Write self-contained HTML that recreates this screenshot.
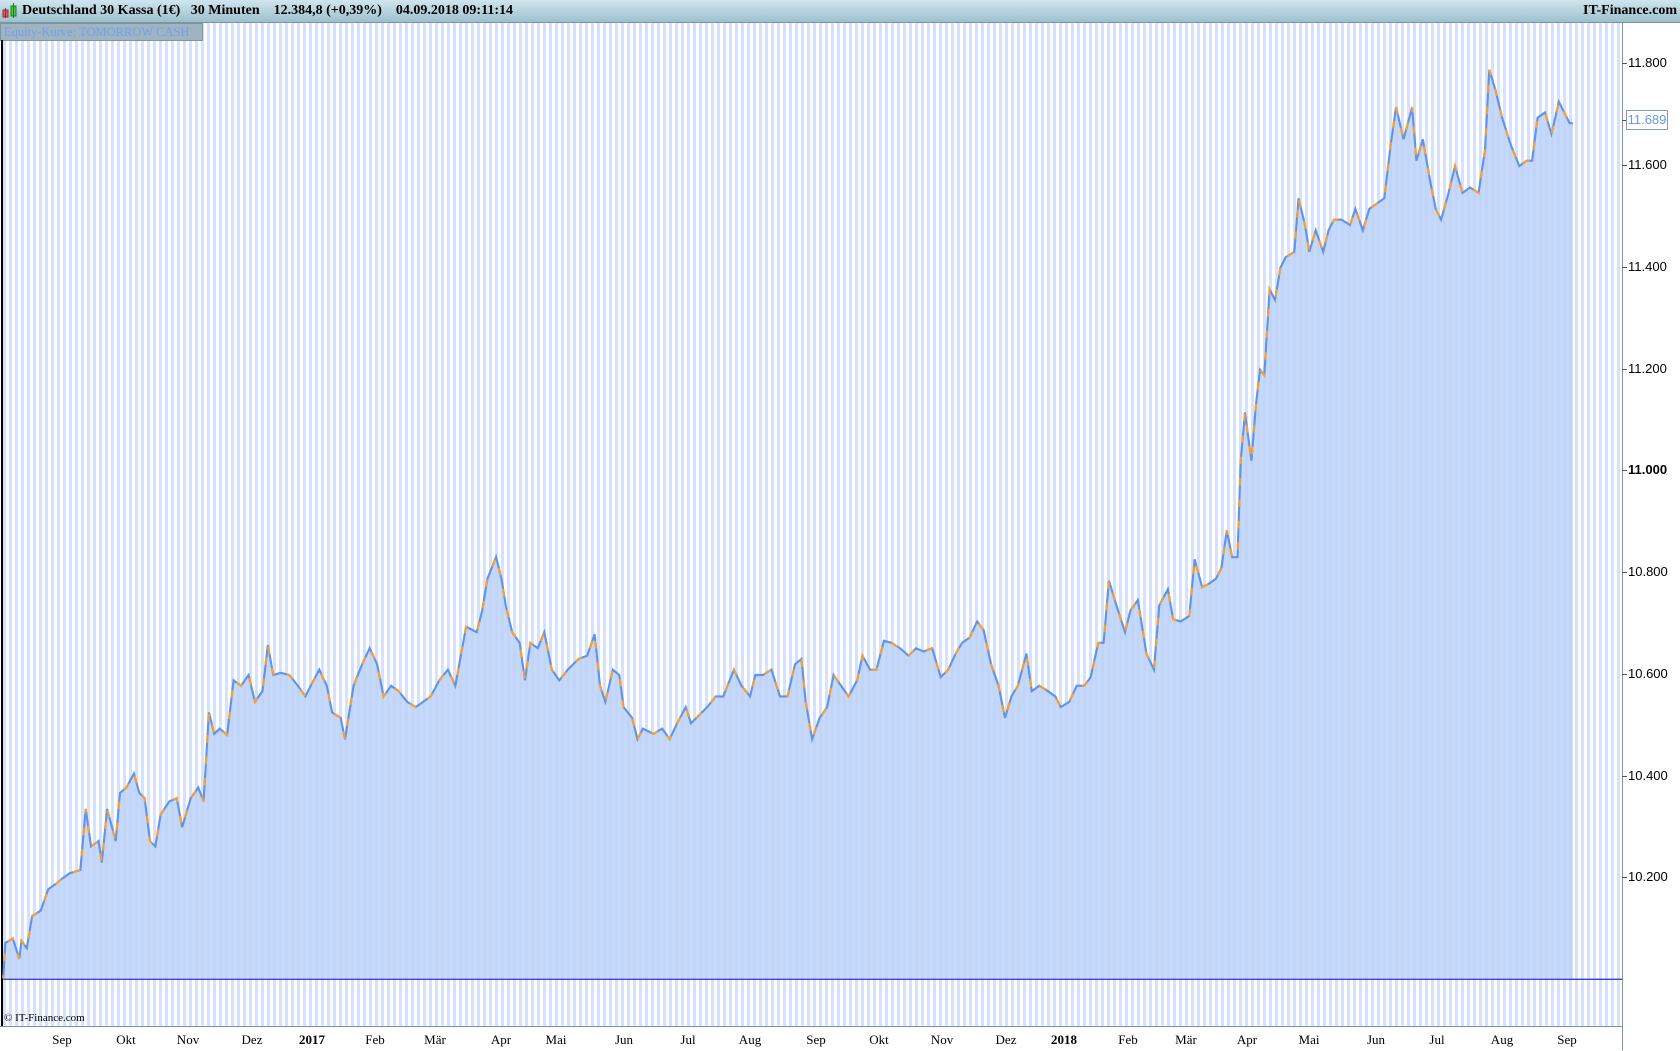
<!DOCTYPE html>
<html><head><meta charset="utf-8"><style>
html,body{margin:0;padding:0;width:1680px;height:1050px;overflow:hidden;background:#fff;font-family:"Liberation Serif",serif}
#hdr{position:absolute;left:0;top:0;width:1680px;height:22px;background:linear-gradient(#cfe5ee,#9ec0cc);border-bottom:1px solid #7b96a0;font-weight:bold;font-size:14px;line-height:22px}
#plot{position:absolute;left:0;top:23px;width:1622px;height:1003px;background:repeating-linear-gradient(90deg,#fff 0,#fff 3px,#d6e2fb 3px,#d6e2fb 6px)}
#raxis{position:absolute;left:1622px;top:23px;width:58px;height:1027px;border-left:1px solid #7b96a0;background:#fff}
#baxis{position:absolute;left:0;top:1026px;width:1622px;height:24px;border-top:1px solid #7b96a0;background:#fff}
.yl{position:absolute;left:1628px;font-size:13px;font-family:"Liberation Sans",sans-serif;color:#000}
.tk{position:absolute;left:1622px;width:5px;height:1px;background:#555}
.ml{position:absolute;top:1032px;font-size:13px;transform:translateX(-50%)}
</style></head><body>
<div id="hdr">
<svg style="position:absolute;left:2px;top:3px" width="18" height="16"><rect x="1" y="7" width="5" height="7" fill="#e55" stroke="#833"/><line x1="3.5" y1="5" x2="3.5" y2="15" stroke="#833"/><rect x="9" y="3" width="5" height="10" fill="#4c4" stroke="#272"/><line x1="11.5" y1="0" x2="11.5" y2="15" stroke="#272"/></svg>
<span style="position:absolute;left:22px">Deutschland 30 Kassa (1€)&nbsp;&nbsp;&nbsp;30 Minuten&nbsp;&nbsp;&nbsp;&nbsp;12.384,8 (+0,39%)&nbsp;&nbsp;&nbsp;&nbsp;04.09.2018 09:11:14</span>
<span style="position:absolute;right:3px">IT-Finance.com</span>
</div>
<div id="plot"></div>
<div style="position:absolute;left:0;top:23px;width:198px;height:16px;background:#9fb4c0;border:1px solid #7b96a0;color:#6f9ff0;font-size:12.5px;line-height:16px;padding-left:3px;white-space:nowrap;overflow:hidden">Equity-Kurve: TOMORROW CASH</div>
<div style="position:absolute;left:1px;top:40px;width:2px;height:986px;background:#000"></div>
<svg style="position:absolute;left:0;top:0" width="1680" height="1050" viewBox="0 0 1568 980">
<defs><polyline id="ln" points="3,913 5,880 12,876 18,895 20,878 25,885 30,855 38,850 45,830 52,825 58,820 65,815 75,812 80,755 85,790 92,785 95,805 100,755 108,785 112,740 118,735 125,722 130,740 135,745 140,785 145,790 150,760 158,748 165,745 170,772 178,745 185,735 190,748 195,665 200,685 205,680 212,686 218,635 225,640 232,630 238,655 245,645 250,602 255,630 262,628 270,630 278,640 285,650 290,640 298,625 305,640 310,665 318,670 322,690 330,640 338,620 345,605 352,620 358,650 365,640 372,645 380,655 388,660 395,655 402,650 410,635 418,625 425,640 435,585 445,590 450,570 455,540 463,520 468,540 472,565 478,590 485,600 490,635 495,600 502,605 508,590 515,625 522,635 530,625 540,615 548,612 555,592 560,640 565,655 572,625 578,630 582,660 590,670 595,690 600,680 610,685 618,680 625,690 632,675 640,660 645,675 650,670 660,660 668,650 675,650 685,625 692,640 700,650 705,630 712,630 720,625 728,650 735,650 742,620 748,615 752,655 758,690 765,670 772,660 778,630 785,640 792,650 800,635 805,612 812,625 818,625 825,598 832,600 840,605 848,612 855,605 862,608 870,605 878,632 885,625 892,610 898,600 905,595 912,580 918,588 925,620 932,640 938,670 944,650 950,640 958,610 963,645 970,640 978,645 985,650 990,660 998,655 1005,640 1012,640 1018,632 1025,600 1030,600 1035,542 1042,565 1050,590 1055,570 1062,560 1070,610 1077,625 1082,565 1090,550 1095,578 1102,580 1110,575 1115,522 1122,548 1128,545 1135,540 1140,530 1145,495 1150,520 1155,520 1158,430 1162,385 1168,430 1172,380 1176,345 1180,350 1185,270 1190,280 1195,250 1200,240 1208,235 1212,185 1218,210 1222,235 1228,215 1235,235 1240,215 1245,205 1252,205 1260,210 1265,195 1272,215 1278,195 1285,190 1292,185 1298,135 1303,100 1310,130 1318,100 1322,150 1328,130 1335,170 1340,195 1345,205 1352,180 1358,155 1365,180 1372,175 1380,180 1386,140 1390,65 1396,85 1402,110 1410,135 1418,155 1425,150 1430,150 1435,110 1442,105 1448,125 1455,95 1460,105 1465,115 1468,115"/></defs>
<path fill="#bcd2f8" fill-opacity="0.85" d="M3,913 L5,880 12,876 18,895 20,878 25,885 30,855 38,850 45,830 52,825 58,820 65,815 75,812 80,755 85,790 92,785 95,805 100,755 108,785 112,740 118,735 125,722 130,740 135,745 140,785 145,790 150,760 158,748 165,745 170,772 178,745 185,735 190,748 195,665 200,685 205,680 212,686 218,635 225,640 232,630 238,655 245,645 250,602 255,630 262,628 270,630 278,640 285,650 290,640 298,625 305,640 310,665 318,670 322,690 330,640 338,620 345,605 352,620 358,650 365,640 372,645 380,655 388,660 395,655 402,650 410,635 418,625 425,640 435,585 445,590 450,570 455,540 463,520 468,540 472,565 478,590 485,600 490,635 495,600 502,605 508,590 515,625 522,635 530,625 540,615 548,612 555,592 560,640 565,655 572,625 578,630 582,660 590,670 595,690 600,680 610,685 618,680 625,690 632,675 640,660 645,675 650,670 660,660 668,650 675,650 685,625 692,640 700,650 705,630 712,630 720,625 728,650 735,650 742,620 748,615 752,655 758,690 765,670 772,660 778,630 785,640 792,650 800,635 805,612 812,625 818,625 825,598 832,600 840,605 848,612 855,605 862,608 870,605 878,632 885,625 892,610 898,600 905,595 912,580 918,588 925,620 932,640 938,670 944,650 950,640 958,610 963,645 970,640 978,645 985,650 990,660 998,655 1005,640 1012,640 1018,632 1025,600 1030,600 1035,542 1042,565 1050,590 1055,570 1062,560 1070,610 1077,625 1082,565 1090,550 1095,578 1102,580 1110,575 1115,522 1122,548 1128,545 1135,540 1140,530 1145,495 1150,520 1155,520 1158,430 1162,385 1168,430 1172,380 1176,345 1180,350 1185,270 1190,280 1195,250 1200,240 1208,235 1212,185 1218,210 1222,235 1228,215 1235,235 1240,215 1245,205 1252,205 1260,210 1265,195 1272,215 1278,195 1285,190 1292,185 1298,135 1303,100 1310,130 1318,100 1322,150 1328,130 1335,170 1340,195 1345,205 1352,180 1358,155 1365,180 1372,175 1380,180 1386,140 1390,65 1396,85 1402,110 1410,135 1418,155 1425,150 1430,150 1435,110 1442,105 1448,125 1455,95 1460,105 1465,115 1468,115 L1468,913 Z"/>
<use href="#ln" fill="none" stroke="#6393e8" stroke-width="2"/>
<use href="#ln" fill="none" stroke="#f5a030" stroke-width="2" stroke-dasharray="7 13" stroke-dashoffset="4"/>
<line x1="3" y1="914" x2="1514" y2="914" stroke="#2a2ad0" stroke-width="1.2"/>
</svg>
<div style="position:absolute;left:4px;top:1012px;font-size:11px">© IT-Finance.com</div>
<div id="raxis"></div>
<div id="baxis"></div>
<div class="tk" style="top:63px"></div><div class="yl" style="top:55px">11.800</div>
<div class="tk" style="top:165px"></div><div class="yl" style="top:157px">11.600</div>
<div class="tk" style="top:267px"></div><div class="yl" style="top:259px">11.400</div>
<div class="tk" style="top:369px"></div><div class="yl" style="top:361px">11.200</div>
<div class="tk" style="top:470px"></div><div class="yl" style="top:462px;font-weight:bold">11.000</div>
<div class="tk" style="top:572px"></div><div class="yl" style="top:564px">10.800</div>
<div class="tk" style="top:674px"></div><div class="yl" style="top:666px">10.600</div>
<div class="tk" style="top:776px"></div><div class="yl" style="top:768px">10.400</div>
<div class="tk" style="top:877px"></div><div class="yl" style="top:869px">10.200</div>
<div class="tk" style="top:120px"></div>
<div style="position:absolute;left:1626px;top:110px;width:40px;height:18px;border:1px solid #8a9aa6;color:#6a98ec;font-size:13px;font-family:'Liberation Sans',sans-serif;line-height:18px;text-align:center">11.689</div>
<div class="ml" style="left:62px">Sep</div><div class="ml" style="left:126px">Okt</div><div class="ml" style="left:188px">Nov</div><div class="ml" style="left:252px">Dez</div><div class="ml" style="left:312px;font-weight:bold">2017</div><div class="ml" style="left:375px">Feb</div><div class="ml" style="left:435px">Mär</div><div class="ml" style="left:501px">Apr</div><div class="ml" style="left:556px">Mai</div><div class="ml" style="left:624px">Jun</div><div class="ml" style="left:688px">Jul</div><div class="ml" style="left:750px">Aug</div><div class="ml" style="left:816px">Sep</div><div class="ml" style="left:879px">Okt</div><div class="ml" style="left:942px">Nov</div><div class="ml" style="left:1006px">Dez</div><div class="ml" style="left:1064px;font-weight:bold">2018</div><div class="ml" style="left:1128px">Feb</div><div class="ml" style="left:1186px">Mär</div><div class="ml" style="left:1247px">Apr</div><div class="ml" style="left:1309px">Mai</div><div class="ml" style="left:1376px">Jun</div><div class="ml" style="left:1437px">Jul</div><div class="ml" style="left:1502px">Aug</div><div class="ml" style="left:1567px">Sep</div>
</body></html>
